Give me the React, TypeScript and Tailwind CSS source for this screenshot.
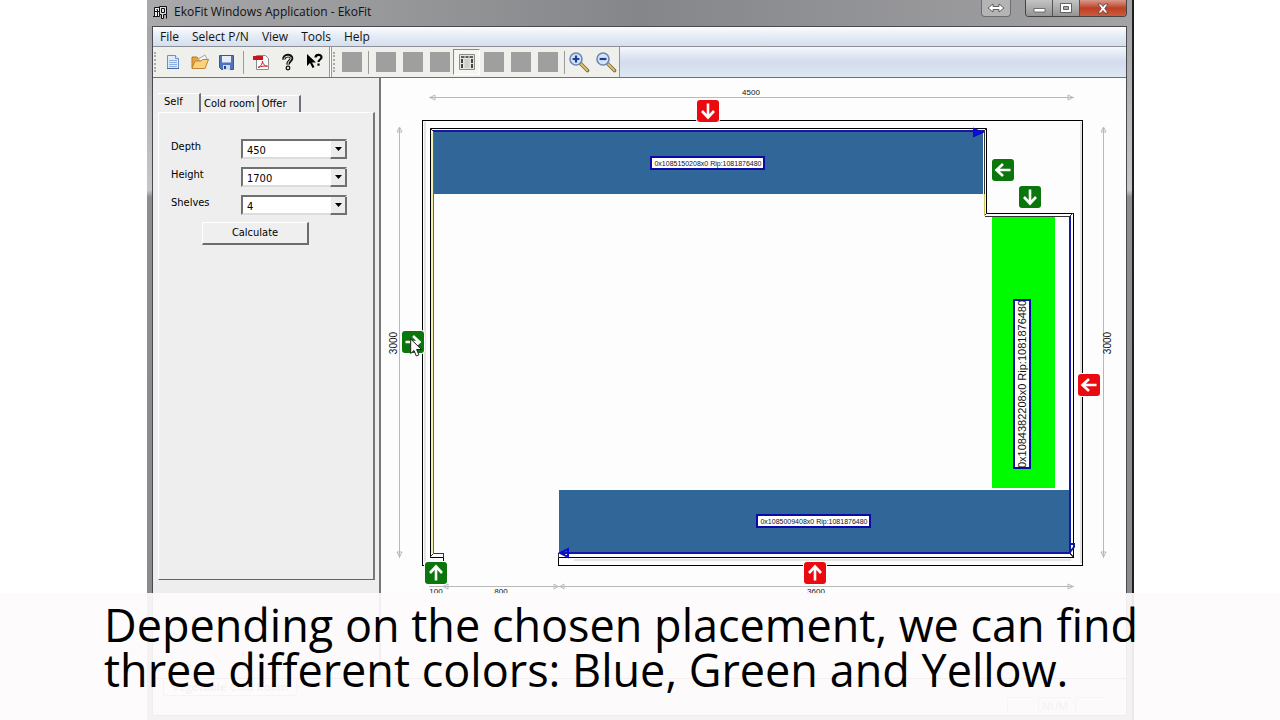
import { useState } from 'react';
import type { ReactNode } from 'react';

const menus = ['File', 'Select P/N', 'View', 'Tools', 'Help'];

const fields = [
  { id: 'depth', label: 'Depth', value: '450', options: ['450', '500', '600'] },
  { id: 'height', label: 'Height', value: '1700', options: ['1700', '1800', '2000'] },
  { id: 'shelves', label: 'Shelves', value: '4', options: ['3', '4', '5'] },
];

// wall markers on the plan, green = free, red = used
const markers = [
  { name: 'Top wall', color: 'bg-[#ea0b10]', place: 'left-[316px] top-[22px]', turn: 'rotate-180' },
  { name: 'Niche side wall', color: 'bg-[#0a760c]', place: 'left-[611px] top-[81px]', turn: '-rotate-90' },
  { name: 'Niche top wall', color: 'bg-[#0a760c]', place: 'left-[638px] top-[108px]', turn: 'rotate-180' },
  { name: 'Right wall', color: 'bg-[#ea0b10]', place: 'left-[697px] top-[296px]', turn: '-rotate-90' },
  { name: 'Left wall', color: 'bg-[#0a760c]', place: 'left-[21px] top-[253px]', turn: 'rotate-90' },
  { name: 'Bottom left wall', color: 'bg-[#0a760c]', place: 'left-[44px] top-[484px]', turn: '' },
  { name: 'Bottom wall', color: 'bg-[#ea0b10]', place: 'left-[423px] top-[484px]', turn: '' },
];

function ToolButton({ label, active, children }: { label: string; active?: boolean; children: ReactNode }) {
  return (
    <button
      type="button"
      aria-label={label}
      className={`flex h-[26px] w-[27px] items-center justify-center ${
        active ? 'border border-r-white border-b-white border-l-[#8a8a8a] border-t-[#8a8a8a] bg-[#f5f5f2]' : ''
      }`}
    >
      {children}
    </button>
  );
}

function Blank({ label }: { label: string }) {
  return (
    <ToolButton label={label}>
      <span className="block size-5 bg-[#9f9f9f]" />
    </ToolButton>
  );
}

function Grip() {
  return <span className="mx-px h-[20px] w-1 border-l-2 border-dotted border-[#aaaaa8]" />;
}

function Sep() {
  return <span className="mx-[3px] h-[23px] w-px bg-[#9c9c9a]" />;
}

function ZoomIcon({ plus }: { plus?: boolean }) {
  return (
    <svg width="22" height="22" viewBox="0 0 22 22" fill="none">
      <path d="M12.5 12.5l7 7" stroke="#7b6a3c" strokeWidth="3.600" strokeLinecap="round" />
      <path d="M13 13l6.3 6.3" stroke="#dfc272" strokeWidth="1.800" strokeLinecap="round" />
      <circle cx="8" cy="8" r="6" fill="#d3e4fb" stroke="#7186b0" strokeWidth="1.6" />
      <path d={plus ? 'M4.6 8h6.8M8 4.6v6.8' : 'M4.6 8h6.8'} stroke="#1c3f96" strokeWidth="2.2" />
    </svg>
  );
}

function Toolbar() {
  return (
    <div className="flex h-[31px] items-center border-b border-[#6f7175] bg-linear-to-b from-[#f4f7fc] via-[#d3dcec] to-[#dfe7f3]">
      <div className="flex h-full items-center border-r border-[#8f949c] bg-[#efefec]">
        <Grip />
        <ToolButton label="New">
          <svg width="16" height="18" viewBox="0 0 16 18">
            <path d="M2.500 2.500h8l3 3v10h-11z" fill="#dfeafa" stroke="#6c8fc4" />
            <path d="M10.500 2.500v3h3" fill="#fff" stroke="#6c8fc4" />
            <path d="M4 7.500h8M4 9.500h8M4 11.500h8M4 13.500h8" stroke="#8fb0e0" />
            <path d="M2 15.500h12" stroke="#3f68a8" />
          </svg>
        </ToolButton>
        <ToolButton label="Open">
          <svg width="20" height="18" viewBox="0 0 20 18">
            <path d="M2 15V4h5l2 2h6v9z" fill="#e9a63a" stroke="#b4762a" />
            <path d="M8 6l7-4 2 4-4 4z" fill="#f3f6fb" stroke="#a8a8a0" />
            <path d="M2 15.500L5 8h6l1.500-1.500h6L15 15.500z" fill="#fbd27b" stroke="#bd8433" />
          </svg>
        </ToolButton>
        <ToolButton label="Save">
          <svg width="17" height="17" viewBox="0 0 17 17">
            <path d="M1.500 1.500h14v14h-12l-2-2z" fill="#4f73bd" stroke="#3556a0" />
            <path d="M4 2h9v6.500H4z" fill="#e6eefb" />
            <path d="M5 11h7v5H5z" fill="#cfdaec" />
            <path d="M6 12h2v3H6z" fill="#24428a" />
          </svg>
        </ToolButton>
        <Sep />
        <ToolButton label="Export PDF">
          <svg width="18" height="18" viewBox="0 0 18 18" fill="none">
            <path d="M4.500 2.500h9l3 3v11h-12z" fill="#fafafa" stroke="#8c8c8c" />
            <path d="M1 3h10v4H1z" fill="#c4161c" />
            <path d="M6 14.500c3-1 4.500-4 4.500-6.500 0 3 2 5 5 5.200-3-.4-6 0-9.500 1.300z" stroke="#c5262b" />
          </svg>
        </ToolButton>
        <ToolButton label="About">
          <svg width="14" height="18" viewBox="0 0 14 18" fill="none">
            <path d="M3 6.500C2.500 1.500 11 1.500 10.500 5.500 10.300 8 7 8 7 11.500" stroke="#111" strokeWidth="3.600" />
            <path d="M3.200 5.800C3.200 2.500 10.300 2.500 10 5.500 9.800 7.500 7 8 7 11" stroke="#f4f4f0" />
            <circle cx="7" cy="15" r="1.800" fill="#f4f4f0" stroke="#111" strokeWidth="1.300" />
          </svg>
        </ToolButton>
        <ToolButton label="Context help">
          <svg width="18" height="20" viewBox="0 0 18 20" fill="none">
            <path d="M1 2v12l3-3 2.500 5 2-1L6 10.500h4z" fill="#000" />
            <path d="M9.500 5.500C9.500 2 15.500 2 15.500 5.200c0 2.300-3 2.300-3 4.800" stroke="#000" strokeWidth="2.200" />
            <path d="M11.400 11.500h2.200v2.200h-2.200z" fill="#000" />
          </svg>
        </ToolButton>
        <span className="ml-px h-full w-[3px] border-x border-[#86a58c] bg-white" />
        <Grip />
        <Blank label="Tool 1" />
        <Sep />
        <Blank label="Tool 2" />
        <Blank label="Tool 3" />
        <Blank label="Tool 4" />
        <ToolButton label="Plan view" active>
          <svg width="16" height="16" viewBox="0 0 16 16" fill="none">
            <path d="M.5.500h15v15H.5z" fill="#e5e5de" stroke="#8c8c88" />
            <path d="M2 3h3.500M6.500 3h3M10.500 3H14" stroke="#333" strokeWidth="1.600" />
            <path d="M3 5v9M13 5v9" stroke="#333" strokeWidth="1.800" strokeDasharray="4 1" />
            <path d="M5.500 5h5v9h-5z" fill="#cfcfc8" />
          </svg>
        </ToolButton>
        <Blank label="Tool 5" />
        <Blank label="Tool 6" />
        <Blank label="Tool 7" />
        <span className="ml-[3px] h-[23px] w-px bg-[#9c9c9a]" />
        <ToolButton label="Zoom in">
          <ZoomIcon plus />
        </ToolButton>
        <ToolButton label="Zoom out">
          <ZoomIcon />
        </ToolButton>
      </div>
    </div>
  );
}

function TitleBar() {
  return (
    <header className="-mx-[5px] flex h-[26px] items-start justify-between bg-linear-to-r from-[#a9a9ab] via-[#858689] to-[#a3a3a6] px-[5px]">
      <div className="flex h-6 items-center gap-1.5 pl-px">
        <svg width="15" height="15" viewBox="0 0 15 15" fill="none" stroke="#111">
          <path d="M1.500 2.500h5v9h-5zM1.500 6.500h5M3.500 4.500h1v7" fill="#eee" />
          <path d="M6.500 1.500h7v8h-3v4h-2v-4h-2z" fill="#ddd" />
          <path d="M8.500 3.500h3v4h-3zM13.500 9.500v4M0 11.500h6" />
        </svg>
        <h1 className="text-[12px] leading-4">EkoFit Windows Application - EkoFit</h1>
      </div>
      <div className="flex items-start">
        <button
          type="button"
          aria-label="Resize"
          className="mr-3.5 flex h-[17px] w-[30px] items-center justify-center rounded-b border border-t-0 border-[#6d6d6d] bg-[#b4b4b4]"
        >
          <svg width="18" height="10" viewBox="0 0 18 10">
            <path d="M1 5l5-4v2.500h6V1l5 4-5 4V6.500H6V9z" fill="#fff" stroke="#555" strokeWidth=".9" />
          </svg>
        </button>
        <div className="flex h-[17px] overflow-hidden rounded-b border border-t-0 border-[#444]">
          <button type="button" aria-label="Minimize" className="flex w-[27px] items-center justify-center border-r border-[#555] bg-linear-to-b from-[#c4c4c4] to-[#949494]">
            <svg width="13" height="12" viewBox="0 0 13 12">
              <path d="M1 6.500h11v3.500H1z" fill="#fff" stroke="#555" strokeWidth=".8" />
            </svg>
          </button>
          <button type="button" aria-label="Maximize" className="flex w-[27px] items-center justify-center border-r border-[#555] bg-linear-to-b from-[#c4c4c4] to-[#949494]">
            <svg width="12" height="10" viewBox="0 0 12 10">
              <path d="M.5.500h11v9H.5z" fill="#fff" stroke="#555" strokeWidth=".9" />
              <path d="M3.500 3.500h5v3h-5z" fill="#aaa" stroke="#555" strokeWidth=".9" />
            </svg>
          </button>
          <button type="button" aria-label="Close" className="flex w-[46px] items-center justify-center bg-linear-to-b from-[#d79a8c] via-[#bd3f25] to-[#cd5a3c]">
            <svg width="12" height="11" viewBox="0 0 12 11">
              <path d="M1 1h3l2 2.500L8 1h3L7.800 5.500 11 10H8L6 7.500 4 10H1l3.200-4.500z" fill="#fff" stroke="#5a3a38" strokeWidth=".8" />
            </svg>
          </button>
        </div>
      </div>
    </header>
  );
}

function SidePanel() {
  const [tab, setTab] = useState('Self');
  const [values, setValues] = useState<Record<string, string>>({ depth: '450', height: '1700', shelves: '4' });

  return (
    <aside className="flex w-[228px] shrink-0 flex-col border-r-2 border-[#77777a] bg-[#eeeeee] pt-[15px] pr-1 pl-[5px] font-['DejaVu_Sans_Condensed','Liberation_Sans',sans-serif] text-[11px] text-black">
      <div role="tablist" className="flex h-[19px] items-end">
        {['Self', 'Cold room', 'Offer'].map((name) => (
          <button
            key={name}
            type="button"
            role="tab"
            aria-selected={tab === name}
            onClick={() => setTab(name)}
            className={`border-t border-r-2 border-t-white border-r-[#6f6f78] text-left leading-4 ${
              tab === name ? 'h-[19px] w-[43px] pb-1 pl-1.5' : 'h-[17px] pr-0.5 pl-[3px] nth-3:w-[42px]'
            }`}
          >
            {name}
          </button>
        ))}
      </div>
      <div className="h-[468px] border-t border-r-2 border-b border-l border-t-white border-r-[#77777a] border-b-[#66666a] border-l-white pt-[26px] pl-3">
        <form onSubmit={(e) => e.preventDefault()}>
          <div className="flex flex-col gap-2">
            {fields.map((f) => (
              <div key={f.id} className="flex h-5 items-start">
                <label htmlFor={f.id} className="w-[70px] leading-4">
                  {f.label}
                </label>
                <div className="relative h-5 w-[106px]">
                  <select
                    id={f.id}
                    value={values[f.id]}
                    onChange={(e) => setValues({ ...values, [f.id]: e.target.value })}
                    className="block h-full w-full appearance-none border-2 border-t-[#707070] border-r-[#dcdcdc] border-b-[#dcdcdc] border-l-[#707070] bg-white pt-0.5 pl-1"
                  >
                    {f.options.map((o) => (
                      <option key={o}>{o}</option>
                    ))}
                  </select>
                  <span className="pointer-events-none absolute top-0.5 right-0 flex h-[18px] w-[17px] items-center justify-center border-r-2 border-b-2 border-l border-l-white border-r-[#707070] border-b-[#707070] bg-[#ececec]">
                    <svg width="7" height="4" viewBox="0 0 7 4">
                      <path d="M0 0h7L3.500 4z" />
                    </svg>
                  </span>
                </div>
              </div>
            ))}
          </div>
          <button
            type="submit"
            className="mt-[7px] ml-[31px] h-[23px] w-[107px] border-t border-r-2 border-b-2 border-l border-t-white border-r-[#6c6c6c] border-b-[#6c6c6c] border-l-white bg-[#efefef]"
          >
            Calculate
          </button>
        </form>
      </div>
    </aside>
  );
}

function Plan() {
  return (
    <main className="relative min-w-0 flex-1 overflow-hidden bg-[#fdfdfd]">
      <svg
        width="744"
        height="600"
        viewBox="381 78 744 600"
        fill="none"
        fontFamily="'Liberation Sans', Arial, sans-serif"
        shapeRendering="crispEdges"
      >
        {/* dimension lines */}
        <g stroke="#b9b9b9">
          <path d="M429 97.500H1074M399.500 127V558M1103.500 127V558M429 586.500H1074" />
          <path
            d="M435 95l-5 2.500 5 2.500zM1068 95l5 2.500-5 2.500zM397 132l2.500-5 2.500 5zM397 552l2.500 5 2.500-5zM1101 132l2.500-5 2.500 5zM1101 552l2.500 5 2.500-5zM448 584l-5 2.500 5 2.500zM554 584l4 2.500-4 2.500zM564 584l-4 2.500 4 2.500zM1068 584l5 2.500-5 2.500z"
            shapeRendering="auto"
          />
        </g>
        <g fill="#111" textAnchor="middle" fontSize="8">
          <text x="751" y="95">4500</text>
          <text x="436" y="594">100</text>
          <text x="501" y="594">800</text>
          <text x="816" y="594">3600</text>
        </g>
        <g fill="#111" textAnchor="middle" fontSize="10">
          <text transform="translate(397 343) rotate(-90)">3000</text>
          <text transform="translate(1111 343) rotate(-90)">3000</text>
        </g>

        {/* wall shadows */}
        <path d="M424.500 122V563M1080.500 122V563M574 559.500H1071" stroke="#e4e4e0" strokeWidth="2" />

        {/* shelves */}
        <path d="M433 131h550v63H433zM559 490h511v63H559z" fill="#306698" />
        <path d="M992 217h63v271h-63z" fill="#00fb00" />

        {/* walls */}
        <path
          d="M558.500 557.500V565.500H1082.500V120.500H422.500V565.500H443.500V557.500H430.500V128.500H986.500V213.500H1073.500V557.500z"
          stroke="#000"
        />
        <path d="M432 133V553" stroke="#f3f0b4" strokeWidth="2" />
        <path d="M433.500 131V553.500" stroke="#6e6c28" />
        <path d="M443.500 553.500H433.500M984.500 131V194M984.500 216.500H1070.500M443.500 553.500V557.500M558.500 553V558" stroke="#333" />
        <path d="M430 557l3-3M430 128l3 3M984 131l3-3M984 216l3-3M1070 216l3-3M1070 553l3 4" stroke="#333" />
        <path d="M984.500 194V216" stroke="#c9c25a" />
        <path d="M433 131H984M1070 217V553H560" stroke="#1717a6" strokeWidth="2" />
        <g stroke="#0a0ad0" strokeWidth="2" shapeRendering="auto">
          <path d="M974 129v7l8-3.500z" fill="#1414d0" />
          <path d="M568 549v8l-8-4z" />
          <path d="M1070 544h4v3l-4 5" stroke="#14149a" />
        </g>

        {/* shelf captions */}
        <g fill="#fff" stroke="#0a0aa8" strokeWidth="2">
          <path d="M651 157h113v12H651zM757 515h113v12H757zM1014 300h16v168h-16z" />
        </g>
        <g fill="#111" textAnchor="middle">
          <text x="708" y="166" fontSize="7">
            0x1085150208x0 Rip:1081876480
          </text>
          <text x="814" y="524" fontSize="7">
            0x1085009408x0 Rip:1081876480
          </text>
          <text transform="translate(1026 384) rotate(-90)" fontSize="11">
            0x1084382208x0 Rip:1081876480
          </text>
        </g>
      </svg>

      {markers.map((m) => (
        <button
          key={m.name}
          type="button"
          aria-label={m.name}
          className={`absolute flex size-[22px] items-center justify-center rounded-[3px] ring-1 ring-white ${m.color} ${m.place}`}
        >
          <svg width="18" height="18" viewBox="0 0 18 18" fill="none" className={m.turn}>
            <path d="M9 16.500V3M3 9l6-6.500L15 9" stroke="#fff" strokeWidth="2.600" />
          </svg>
        </button>
      ))}

      {/* mouse pointer */}
      <svg className="absolute top-[260px] left-[29px]" width="13" height="20" viewBox="0 0 13 20">
        <path d="M.7 1v14.500l3.300-3 2.300 5.500 2.600-1.200-2.300-5.300h4.900z" fill="#fff" stroke="#222" />
      </svg>
    </main>
  );
}

export default function App() {
  return (
    <div className="relative flex min-h-screen flex-col bg-white px-[146px] font-['Open_Sans','Noto_Sans',sans-serif] text-[#111]">
      <div className="ml-px flex flex-1 flex-col border-r-2 border-[#1d1d22] bg-[linear-gradient(#a0a0a2_0,#c6c6c8_190px,#8e8e90_197px,#8a8a8c_100%)] px-[5px] pb-1">
        <TitleBar />
        <div className="flex flex-1 flex-col border border-[#4a4a4e] bg-[#eeeeee]">
          <nav className="flex h-[20px] items-center gap-[13px] border-b border-[#8d9096] bg-linear-to-b from-[#fbfcfe] via-[#e4ebf5] to-[#d5dfec] pl-[7px] text-[12px]">
            {menus.map((m) => (
              <button key={m} type="button" className="leading-4">
                {m}
              </button>
            ))}
          </nav>
          <Toolbar />
          <div className="flex">
            <SidePanel />
            <Plan />
          </div>
          <footer className="flex flex-1 flex-col border-t border-[#777] text-[11px]">
            <div className="flex h-[18px]">
              <button type="button" className="ml-2.5 h-[17px] rounded-b border border-t-0 border-[#999] bg-white px-2 leading-4 font-bold text-[#888]">
                Vegetable Cold Room
              </button>
            </div>
            <div className="flex h-4 items-center justify-end gap-1 pr-5 text-[#777]">
              <span className="h-4 w-[27px] border-t border-l border-[#aaa]" />
              <span className="h-4 w-[33px] border-t border-l border-[#aaa] text-center leading-4">NUM</span>
              <span className="h-4 w-[31px] border-t border-l border-[#aaa]" />
            </div>
          </footer>
        </div>
      </div>

      <div className="absolute inset-x-0 bottom-0 h-[127px] bg-[#fdfbfc]/92 pt-[9px] pl-[104px]">
        <p className="text-[45px] leading-[45px] whitespace-nowrap text-black">
          Depending on the chosen placement, we can find
          <br />
          three different colors: Blue, Green and Yellow.
        </p>
      </div>
    </div>
  );
}
